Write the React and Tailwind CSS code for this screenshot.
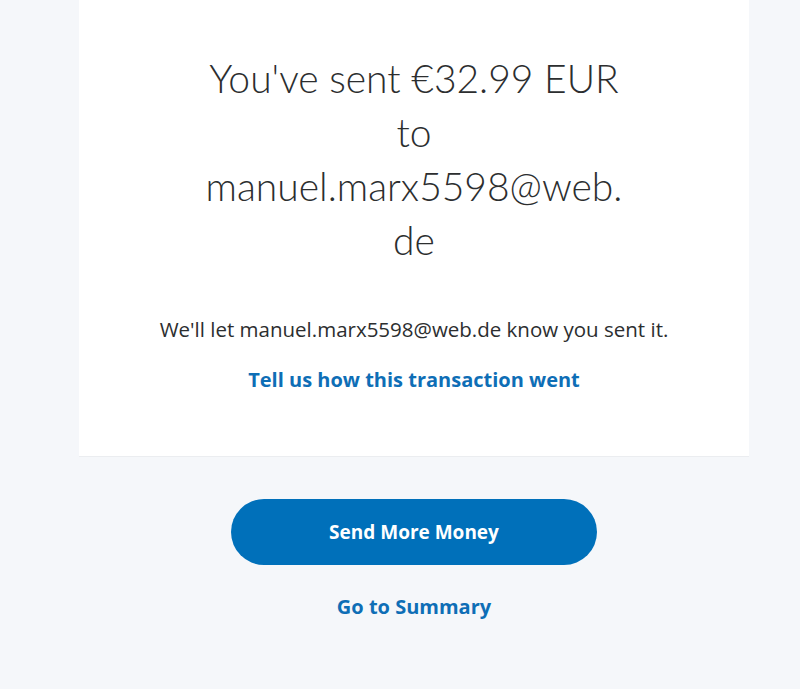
export default function App() {
  return (
    <div className="min-h-[689px] w-full bg-[#f5f7fa]">
      <div className="ml-[79px] w-[670px] flex flex-col items-center" style={{ fontFamily: '"Open Sans", sans-serif' }}>
        <div className="w-full bg-white border-b border-[#ebedf0] flex flex-col items-center pt-[51px] pb-[62px]">
          <h1
            className="w-[440px] text-center text-[39px] leading-[54px] font-light text-[#2c2e2f]"
            style={{ fontFamily: 'Lato, "Open Sans", sans-serif' }}
          >
            You've sent €32.99 EUR to manuel.marx5598@web.<wbr />de
          </h1>
          <p className="mt-[48px] text-[20.5px] leading-[28px] text-[#2c2e2f]">
            We'll let manuel.marx5598@web.de know you sent it.
          </p>
          <a className="mt-[23px] text-[20px] leading-[28px] font-bold text-[#0e6eb6]">
            Tell us how this transaction went
          </a>
        </div>
        <button className="mt-[42px] w-[366px] h-[66px] rounded-full bg-[#0070ba] text-white text-[19px] font-bold">
          Send More Money
        </button>
        <a className="mt-[27px] text-[20px] font-bold text-[#0e6eb6]">Go to Summary</a>
      </div>
    </div>
  )
}
